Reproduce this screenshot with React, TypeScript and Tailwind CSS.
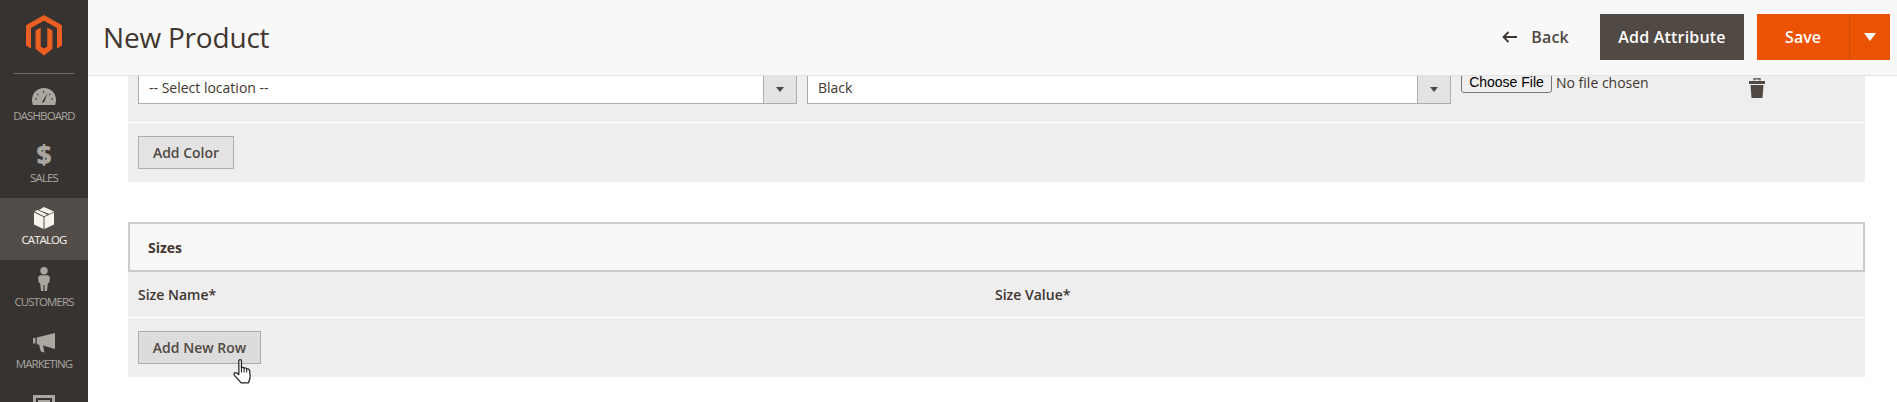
const sans = 'font-["Open_Sans",sans-serif]'

function Logo() {
  return (
    <svg width="36" height="41" viewBox="0 0 36 41" className="block">
      <path d="M18 0 L36 10.2 V30.6 L31 33.5 V13 L18 5.7 L5 13 V33.5 L0 30.6 V10.2 Z" fill="#eb5f23" />
      <path d="M9.5 15.6 L14.7 12.6 V31.5 L18 33.4 L21.3 31.5 V12.6 L26.5 15.6 V33.8 L18 40.6 L9.5 33.8 Z" fill="#eb5f23" />
      <path d="M16 11.5 H20 V29 L18 30.2 L16 29 Z" fill="#373330" />
    </svg>
  )
}

function Gauge() {
  return (
    <svg width="24" height="17" viewBox="0 0 24 17" className="block">
      <path d="M12 0 C5 0 0 5.5 0 12 C0 14 .4 15.5 1 17 H23 C23.6 15.5 24 14 24 12 C24 5.500 19 0 12 0 Z" fill="#aaa6a0" />
      <path d="M15.500 5 L11 12.500 L9.800 15.500 L12.500 13.500 Z" fill="#373330" />
      <path d="M3 11 H5 M5 6 L6.500 7 M11.500 3 V5 M18.500 6 L17 7 M19 11 H21" stroke="#373330" strokeWidth="1" />
    </svg>
  )
}

function Box() {
  return (
    <svg width="20" height="22" viewBox="0 0 20 22" className="block">
      <path d="M0 5.500 L9.500 10 V22 L0 17.500 Z M10.500 10 L20 5.500 V17.500 L10.500 22 Z" fill="#f7f3eb" />
      <path d="M5 3 L10 0 L20 4.500 L15.500 7 Z" fill="#f7f3eb" />
      <path d="M0.500 4.500 L3.500 3 L13.500 7.800 L10 9.200 Z" fill="#f7f3eb" />
    </svg>
  )
}

function Person() {
  return (
    <svg width="12" height="24" viewBox="0 0 12 24" className="block">
      <circle cx="6" cy="3.700" r="3.700" fill="#aaa6a0" />
      <path d="M2 8.300 H10 L12 10.500 L11.200 15.500 L9.800 16.500 L9 24 H6.600 V18 H5.400 V24 H3 L2.200 16.500 L.8 15.500 L0 10.500 Z" fill="#aaa6a0" />
    </svg>
  )
}

function Megaphone() {
  return (
    <svg width="22" height="20" viewBox="0 0 22 20" className="block">
      <path d="M0 5 H2.500 V10.500 H0 Z" fill="#aaa6a0" />
      <path d="M3.800 4.500 L22 0 V16 L10 12.500 L11.500 19.500 L7.800 18.500 L6 11.500 H3.800 Z" fill="#aaa6a0" />
    </svg>
  )
}

function Trash() {
  return (
    <svg width="16" height="20" viewBox="0 0 16 20" className="block">
      <path d="M5 2.500 V.8 H11 V2.500" fill="none" stroke="#514943" strokeWidth="1.300" />
      <path d="M0 3 H16 V6 H0 Z M1.500 7 H14.500 L13.500 20 H2.500 Z" fill="#514943" />
    </svg>
  )
}

function Hand() {
  return (
    <svg width="20" height="25" viewBox="0 0 19 24" className="block">
      <path
        d="M5.500 1.800 C5.500 .3 8 .3 8 1.800 V8.500 C9 7.800 10.200 8 10.500 9 C11.500 8.200 12.800 8.600 13 9.800 C14 9.200 15.600 9.600 15.800 11 L16.300 16 C16.500 19 15.500 20.500 14.800 22.800 H7.500 C5.500 20 3.500 18.500 1.200 15.500 C.2 13.800 2 12.400 3.500 13.500 L5.500 15 Z"
        fill="#fff"
        stroke="#222"
        strokeWidth="1.200"
        strokeLinejoin="round"
      />
      <path d="M8 8.500 V13 M10.500 9 V13 M13 9.800 V13" stroke="#222" strokeWidth="1" fill="none" />
    </svg>
  )
}

function NavItem({ icon, label, active }: { icon: React.ReactNode; label: string; active?: boolean }) {
  return (
    <div className={`h-[62px] flex flex-col items-center justify-end pb-[13px] ${active ? 'bg-[#524d49] text-[#f7f3eb]' : 'text-[#aaa6a0]'}`}>
      <div className="h-[26px] flex items-end justify-center mb-[4px]">{icon}</div>
      <span className="text-[11.5px] leading-[14px] tracking-[-0.9px]">{label}</span>
    </div>
  )
}

function SelectBox({ label, className }: { label: string; className: string }) {
  return (
    <div className={`h-[28px] flex bg-white border-x border-b border-[#adadad] text-[14px] text-[#41362f] ${className}`}>
      <div className="flex-1 px-[10px] leading-[24px]">{label}</div>
      <div className="w-[33px] bg-[#e3e3e3] border-l border-[#adadad] flex items-center justify-center">
        <div className="w-0 h-0 border-x-[4px] border-x-transparent border-t-[5px] border-t-[#514943]" />
      </div>
    </div>
  )
}

export default function App() {
  return (
    <div className={`h-[402px] w-[1897px] overflow-hidden flex bg-white ${sans}`}>
      <aside className="w-[88px] shrink-0 bg-[#373330]">
        <div className="h-[74px] mx-[14px] border-b border-[#736e69] flex justify-center pt-[15px]">
          <Logo />
        </div>
        <NavItem icon={<Gauge />} label="DASHBOARD" />
        <NavItem icon={<span className="text-[26px] leading-[26px] font-extrabold">$</span>} label="SALES" />
        <NavItem icon={<Box />} label="CATALOG" active />
        <NavItem icon={<Person />} label="CUSTOMERS" />
        <NavItem icon={<Megaphone />} label="MARKETING" />
        <div className="flex justify-center pt-[11px]">
          <div className="w-[22px] h-[24px] border-[3px] border-[#aaa6a0] p-[2px]">
            <div className="h-[6px] bg-[#aaa6a0]" />
          </div>
        </div>
      </aside>

      <main className="flex-1 min-w-0">
        <header className="relative z-10 h-[76px] bg-[#f8f8f8] border-b border-[#e3e3e3] flex items-center pl-[15px] pr-[7px] pb-px">
          <h1 className="text-[28px] leading-[36px] -mt-[1px] tracking-[-0.2px] text-[#41362f] font-normal flex-1">New Product</h1>
          <div className="flex items-center text-[#514943] font-semibold text-[16px] tracking-[0.2px] mr-[31px]">
            <svg width="16" height="12" viewBox="0 0 16 12" className="mr-[13px]">
              <path d="M15 6 H2 M6.500 1 L1.500 6 L6.500 11" fill="none" stroke="#41362f" strokeWidth="1.800" />
            </svg>
            Back
          </div>
          <button className="h-[46px] w-[144px] bg-[#514943] text-white font-semibold text-[16px] tracking-[0.2px]">Add Attribute</button>
          <div className="h-[46px] w-[133px] ml-[13px] flex bg-[#eb5202] text-white font-semibold text-[16px]">
            <div className="w-[92px] flex items-center justify-center">Save</div>
            <div className="flex-1 border-l border-[#c94a08] flex items-center justify-center">
              <div className="w-0 h-0 border-x-[6px] border-x-transparent border-t-[8px] border-t-white" />
            </div>
          </div>
        </header>

        <div className="pl-[40px] pr-[32px]">
          <div className="h-[46px] bg-[#eeeeee] pl-[10px] flex items-start">
            <SelectBox label="-- Select location --" className="w-[659px]" />
            <SelectBox label="Black" className="w-[644px] ml-[10px]" />
            <button className="ml-[10px] -mt-[6px] h-[23px] w-[91px] bg-[#efefef] border border-[#767676] rounded-[3px] font-['Liberation_Sans',sans-serif] text-[14px] leading-[16px] text-black">
              Choose File
            </button>
            <span className="ml-[4px] text-[14px] leading-[14px] text-[#41362f]">No file chosen</span>
            <div className="ml-[100px] mt-[2px]">
              <Trash />
            </div>
          </div>
          <div className="h-[59px] mt-px bg-[#eeeeee] pl-[10px] pt-[13px]">
            <button className="h-[33px] w-[96px] bg-[#e3e3e3] border border-[#adadad] text-[14px] font-semibold text-[#514943]">Add Color</button>
          </div>

          <div className="mt-[40px] h-[50px] bg-[#f8f8f8] border-[2px] border-[#cccccc] flex items-center pl-[18px] text-[14px] font-bold text-[#41362f]">
            Sizes
          </div>
          <div className="h-[45px] bg-[#eeeeee] grid grid-cols-[857px_1fr] items-center pl-[10px] text-[14px] font-semibold text-[#41362f]">
            <span>Size Name*</span>
            <span>Size Value*</span>
          </div>
          <div className="h-[59px] mt-px bg-[#eeeeee] pl-[10px] pt-[13px]">
            <button className="relative h-[33px] w-[123px] bg-[#dcdcdc] border border-[#adadad] text-[14px] font-semibold text-[#514943]">
              Add New Row
              <span className="absolute left-[94px] top-[27px]">
                <Hand />
              </span>
            </button>
          </div>
        </div>
      </main>
    </div>
  )
}
